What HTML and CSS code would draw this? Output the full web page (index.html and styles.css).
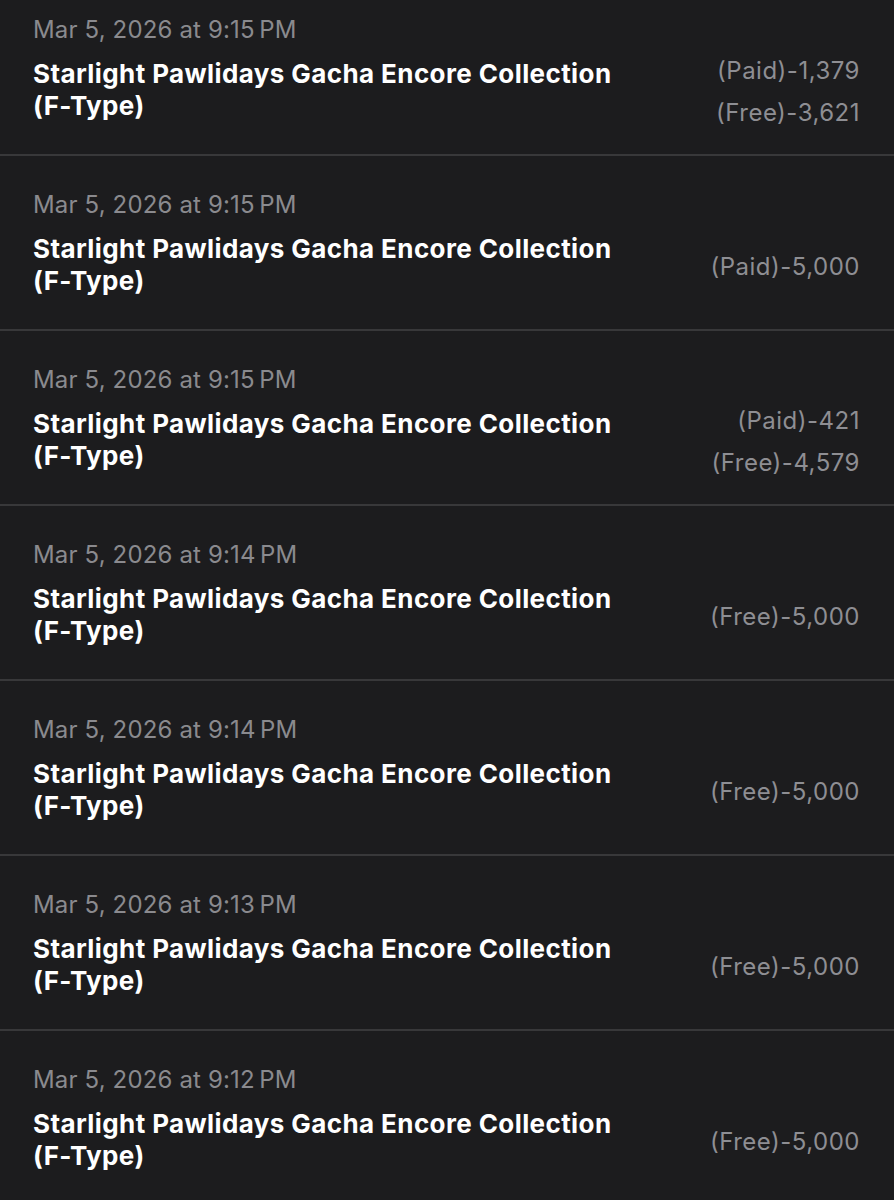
FILE: index.html
```
<!DOCTYPE html>
<html lang="en">
<head>
    <meta charset="UTF-8">
    <title>Purchase History</title>
    <link rel="stylesheet" href="styles.css">
</head>
<body>
    <div class="history">
        <div class="entry">
            <div class="entry-date">Mar 5, 2026 at 9:15&#8239;PM</div>
            <div class="entry-body">
                <div class="entry-title">Starlight Pawlidays Gacha Encore Collection (F-Type)</div>
                <div class="entry-amounts">
                    <div>(Paid)-1,379</div>
                    <div>(Free)-3,621</div>
                </div>
            </div>
        </div>
        <div class="entry">
            <div class="entry-date">Mar 5, 2026 at 9:15&#8239;PM</div>
            <div class="entry-body">
                <div class="entry-title">Starlight Pawlidays Gacha Encore Collection (F-Type)</div>
                <div class="entry-amounts">
                    <div>(Paid)-5,000</div>
                </div>
            </div>
        </div>
        <div class="entry">
            <div class="entry-date">Mar 5, 2026 at 9:15&#8239;PM</div>
            <div class="entry-body">
                <div class="entry-title">Starlight Pawlidays Gacha Encore Collection (F-Type)</div>
                <div class="entry-amounts">
                    <div>(Paid)-421</div>
                    <div>(Free)-4,579</div>
                </div>
            </div>
        </div>
        <div class="entry">
            <div class="entry-date">Mar 5, 2026 at 9:14&#8239;PM</div>
            <div class="entry-body">
                <div class="entry-title">Starlight Pawlidays Gacha Encore Collection (F-Type)</div>
                <div class="entry-amounts">
                    <div>(Free)-5,000</div>
                </div>
            </div>
        </div>
        <div class="entry">
            <div class="entry-date">Mar 5, 2026 at 9:14&#8239;PM</div>
            <div class="entry-body">
                <div class="entry-title">Starlight Pawlidays Gacha Encore Collection (F-Type)</div>
                <div class="entry-amounts">
                    <div>(Free)-5,000</div>
                </div>
            </div>
        </div>
        <div class="entry">
            <div class="entry-date">Mar 5, 2026 at 9:13&#8239;PM</div>
            <div class="entry-body">
                <div class="entry-title">Starlight Pawlidays Gacha Encore Collection (F-Type)</div>
                <div class="entry-amounts">
                    <div>(Free)-5,000</div>
                </div>
            </div>
        </div>
        <div class="entry">
            <div class="entry-date">Mar 5, 2026 at 9:12&#8239;PM</div>
            <div class="entry-body">
                <div class="entry-title">Starlight Pawlidays Gacha Encore Collection (F-Type)</div>
                <div class="entry-amounts">
                    <div>(Free)-5,000</div>
                </div>
            </div>
        </div>
    </div>
</body>
</html>
```

FILE: styles.css
```
body {
    font-family: Inter, "Noto Sans", sans-serif;
    background-color: #1C1C1E;
    color: #FFF;
    margin: 0;
    overflow: hidden;
}
.history {
    margin-top: -19px;
}
.entry {
    height: 175px;
    padding: 34px 34px 0 33px;
    border-bottom: 2px solid #38383A;
    box-sizing: border-box;
}
.entry-date {
    font-size: 24px;
    letter-spacing: 0.15px;
    line-height: 30px;
    color: #8A8A8E;
}
.entry-body {
    display: flex;
    align-items: center;
    justify-content: space-between;
    height: 64px;
    margin-top: 13px;
}
.entry-title {
    flex: 0 0 600px;
    font-size: 26px;
    font-weight: 700;
    letter-spacing: 0.4px;
    line-height: 32px;
}
.entry-amounts {
    flex: none;
    padding-top: 3px;
    text-align: right;
    font-size: 24px;
    letter-spacing: 0.5px;
    line-height: 42px;
    color: #8E8E93;
}
```
